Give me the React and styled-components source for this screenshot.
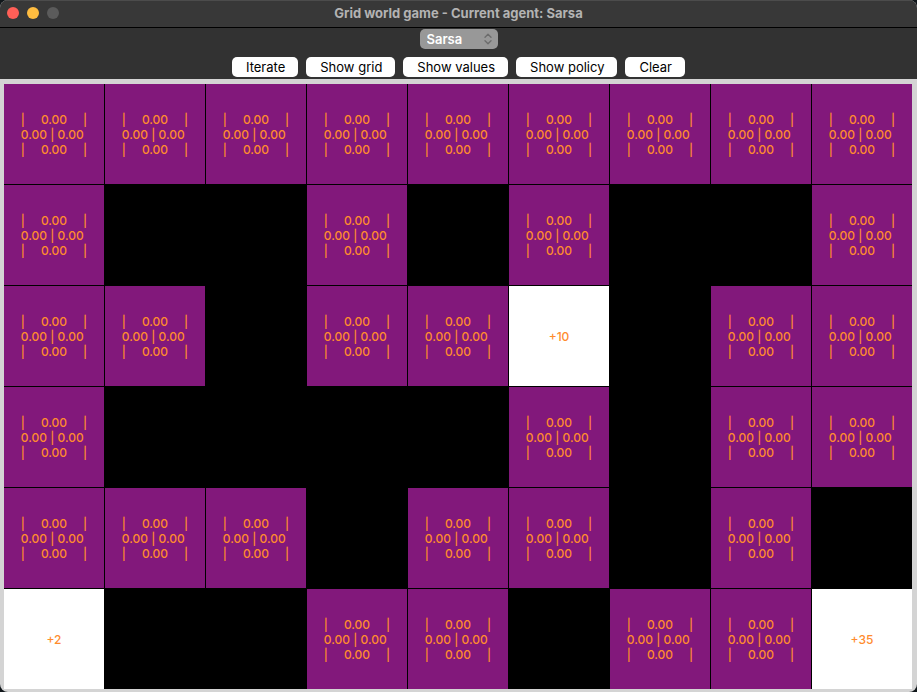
import React, { useState } from "react";
import styled, { createGlobalStyle } from "styled-components";

const GlobalStyle = createGlobalStyle`
  * { box-sizing: border-box; }
  body {
    margin: 0;
    background: #10161a;
    font-family: Inter, "Liberation Sans", sans-serif;
  }
`;

const Window = styled.div`
  min-height: 100vh;
  display: flex;
  flex-direction: column;
  overflow: hidden;
  background: #d4d4d4;
  border-radius: 8px;
`;

const TitleBar = styled.header`
  height: 28px;
  display: grid;
  grid-template-columns: 1fr auto 1fr;
  align-items: center;
  padding: 0 7px 2px;
  background: #383838;
  border-bottom: 1px solid #000;
  box-shadow: inset 0 1px 0 #4c4c4c;
`;

const WindowControls = styled.div`
  display: flex;
  gap: 8px;
`;

const ControlDot = styled.button`
  width: 12px;
  height: 12px;
  padding: 0;
  border: 0;
  border-radius: 50%;
  background: ${(p) => p.$color};
`;

const Title = styled.h1`
  margin: 0;
  font-size: 13px;
  line-height: 16px;
  font-weight: 700;
  color: #b3b3b3;
`;

const Toolbar = styled.div`
  display: flex;
  flex-direction: column;
  align-items: center;
  gap: 8px;
  padding: 1px 0 2px;
  background: #323232;
`;

const SelectWrap = styled.div`
  display: grid;
  align-items: center;
  width: 78px;
  height: 20px;

  & > * { grid-area: 1 / 1; }
  svg { justify-self: end; margin-right: 6px; pointer-events: none; }
`;

const AgentSelect = styled.select`
  appearance: none;
  width: 100%;
  height: 20px;
  padding: 0 20px 0 7px;
  border: 0;
  border-radius: 5px;
  background: #989898;
  color: #fff;
  font: 600 13px/20px Inter, sans-serif;
`;

const ButtonRow = styled.div`
  display: flex;
  justify-content: center;
  gap: 8px;
`;

const ActionButton = styled.button`
  height: 20px;
  padding: 0 13px 0 14px;
  border: 0;
  border-radius: 5px;
  background: #fff;
  color: #000;
  font: 400 13px/19px Inter, sans-serif;
`;

const Board = styled.main`
  flex: 1;
  display: grid;
  padding: 5px 5px 3px 4px;
`;

const Grid = styled.div`
  display: grid;
  grid-template-columns: repeat(9, 1fr);
  grid-auto-rows: 1fr;
  gap: 1px;
  background: #000;
`;

const Cell = styled.div`
  display: flex;
  align-items: center;
  justify-content: center;
  min-height: 100px;
  background: ${(p) => p.$fill};
  color: #ff8c2e;
  font-size: 12px;
  font-weight: 500;
  line-height: 15px;
`;

const Values = styled.div`
  white-space: pre;
`;

const AGENTS = ["Sarsa", "Q-Learning"];
const ACTIONS = ["Iterate", "Show grid", "Show values", "Show policy", "Clear"];
const GAP = "     ";
const FILLS = { open: "#82187b", wall: "#000", goal: "#fff" };

const WORLD = [
  [".", ".", ".", ".", ".", ".", ".", ".", "."],
  [".", "#", "#", ".", "#", ".", "#", "#", "."],
  [".", ".", "#", ".", ".", "+10", "#", ".", "."],
  [".", "#", "#", "#", "#", ".", "#", ".", "."],
  [".", ".", ".", "#", ".", ".", "#", ".", "#"],
  ["+2", "#", "#", ".", ".", "#", ".", ".", "+35"],
];

function StateCell({ kind }) {
  if (kind === "#") return <Cell $fill={FILLS.wall} />;
  if (kind !== ".") return <Cell $fill={FILLS.goal}>{kind}</Cell>;
  const v = (0).toFixed(2);
  return (
    <Cell $fill={FILLS.open}>
      <Values>{`|${GAP}${v}${GAP}|\n${v} | ${v}\n|${GAP}${v}${GAP}|`}</Values>
    </Cell>
  );
}

export default function App() {
  const [agent, setAgent] = useState("Sarsa");
  return (
    <>
      <GlobalStyle />
      <Window>
        <TitleBar>
          <WindowControls>
            <ControlDot $color="#ff5f57" aria-label="Close" />
            <ControlDot $color="#febc40" aria-label="Minimize" />
            <ControlDot $color="#5b5b5b" aria-label="Zoom" disabled />
          </WindowControls>
          <Title>Grid world game - Current agent: {agent}</Title>
        </TitleBar>
        <Toolbar>
          <SelectWrap>
            <AgentSelect
              aria-label="Agent"
              value={agent}
              onChange={(e) => setAgent(e.target.value)}
            >
              {AGENTS.map((name) => (
                <option key={name}>{name}</option>
              ))}
            </AgentSelect>
            <svg width="8" height="12" viewBox="0 0 8 12" fill="none" stroke="#6c6c6c" strokeWidth="1.4" strokeLinecap="round" strokeLinejoin="round" aria-hidden="true">
              <path d="M1 4.2 4 1.2l3 3M1 7.8l3 3 3-3" />
            </svg>
          </SelectWrap>
          <ButtonRow>
            {ACTIONS.map((label) => (
              <ActionButton key={label}>{label}</ActionButton>
            ))}
          </ButtonRow>
        </Toolbar>
        <Board>
          <Grid>
            {WORLD.flatMap((row, y) =>
              row.map((kind, x) => <StateCell key={`${x}-${y}`} kind={kind} />)
            )}
          </Grid>
        </Board>
      </Window>
    </>
  );
}
